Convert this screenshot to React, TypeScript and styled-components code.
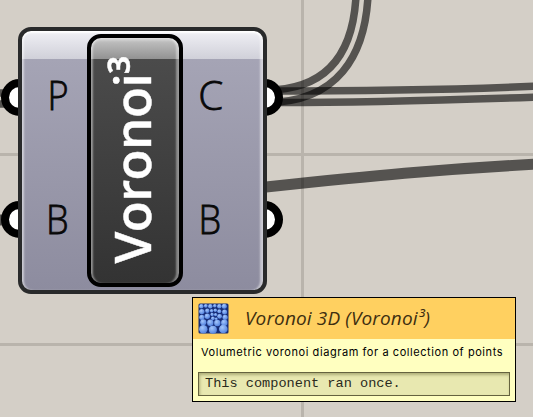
import React from "react";
import styled, { createGlobalStyle } from "styled-components";

const Global = createGlobalStyle`
  html, body, #root { margin: 0; height: 100%; }
  body { overflow: hidden; }
`;

const Canvas = styled.main`
  position: relative;
  width: 533px;
  height: 417px;
  overflow: hidden;
  background: #d4cfc7;
`;

const Wires = styled.svg`
  position: absolute;
  inset: 0;
`;

const Node = styled.section`
  position: absolute;
  left: 18px;
  top: 27px;
  width: 249px;
  height: 267px;
  box-sizing: border-box;
  padding: 3px 0;
  border: 4px solid #292a2b;
  border-radius: 13px;
  display: grid;
  grid-template-columns: 65px 96px 1fr;
  background: linear-gradient(#f0f0f5 0, #d0d0d9 28px, #a5a4b5 28px, #8d8c9f 100%) padding-box;
  box-shadow: inset 0 3px 2px -1px #fff, inset 3px 0 2px -1px rgba(255, 255, 255, 0.5),
    inset -4px 0 2px -1px rgba(255, 255, 255, 0.5);
`;

const PortColumn = styled.div`
  display: grid;
  grid-template-rows: 124px 124px;
  justify-items: center;
`;

const PortName = styled.span<{ $shift: number; $stretch?: number }>`
  font: 300 41px/121px "Open Sans", "Noto Sans", sans-serif;
  color: #080808;
  -webkit-text-stroke: 0.8px #080808;
  transform: translateX(${(p) => p.$shift}px) scaleX(${(p) => p.$stretch ?? 0.88});
`;

const Plate = styled.div`
  width: 96px;
  height: 253px;
  box-sizing: border-box;
  border: 4px solid #000;
  border-radius: 14px;
  display: flex;
  align-items: center;
  justify-content: center;
  background: linear-gradient(#c6c6c6 0, #929292 21px, #4b4b4b 21px, #333 100%) padding-box;
  box-shadow: inset 0 3px 3px -1px rgba(255, 255, 255, 0.45), inset 3px 0 2px -1px rgba(255, 255, 255, 0.42),
    inset -4px 0 2px -1px rgba(255, 255, 255, 0.4);
`;

const PlateName = styled.span`
  writing-mode: vertical-rl;
  transform: translate(-4px, -1px) rotate(180deg);
  font: 600 51px/70px "Open Sans", "Noto Sans", sans-serif;
  letter-spacing: -0.6px;
  color: #fff;
  -webkit-text-stroke: 0.4px #fff;
  white-space: nowrap;
`;

const Tooltip = styled.aside`
  position: absolute;
  left: 192px;
  top: 297px;
  width: 324px;
  height: 105px;
  box-sizing: border-box;
  border: 1px solid #000;
  background: #ffffc0;
`;

const TipHeader = styled.header`
  height: 41px;
  display: flex;
  align-items: center;
  padding-left: 5px;
  gap: 16px;
  background: #ffd060;
`;

const TipTitle = styled.h1`
  margin: 0;
  font: italic 400 19px/39px "Open Sans", "Noto Sans", sans-serif;
  letter-spacing: 0.14px;
  color: #3d2e10;
  white-space: nowrap;
`;

const TipText = styled.p`
  margin: 0;
  padding-left: 8px;
  font: 400 11px/26px Inter, sans-serif;
  letter-spacing: 0.57px;
  color: #000;
  white-space: nowrap;
`;

const Status = styled.div`
  margin: 7px 5px 0 5px;
  height: 24px;
  box-sizing: border-box;
  border: 1px solid #66633f;
  background: #e8e8b0;
  box-shadow: inset 1px 2px 3px rgba(90, 90, 40, 0.4);
  padding-left: 6px;
  font: 400 13.6px/21px "Liberation Mono", monospace;
  color: #2a2a1c;
  white-space: nowrap;
`;

const cells: [number, number, number][] = [
  [3, 3, 2], [7.5, 2.5, 1.7], [12, 3, 2], [16.5, 2.5, 1.6], [21, 3, 2], [26, 3, 2.3],
  [3.5, 8.3, 2.5], [9, 7.5, 2], [13.3, 7.5, 1.5], [17, 7, 1.5], [21, 8, 1.8], [26.3, 8.6, 2.3],
  [3.5, 14, 2.4], [9, 13, 2.5], [13.8, 11.2, 1.5], [17.3, 11.3, 1.4], [21.3, 13, 2.2], [26.8, 14, 2.4],
  [14.6, 15, 1.7], [18, 15.5, 1.2], [5, 19, 2.9], [12, 19.5, 3], [19, 19.7, 3], [26, 19.5, 3],
  [5, 26, 4], [14.6, 26.4, 3.8], [25, 25.7, 4.1],
];

const VoronoiIcon = () => (
  <svg width="31" height="31" viewBox="0 0 31 31">
    <defs>
      <radialGradient id="cell" cx=".38" cy=".32" r=".75">
        <stop offset="0" stopColor="#a5c7fb" />
        <stop offset="1" stopColor="#4c7ddd" />
      </radialGradient>
    </defs>
    <rect x=".5" y=".5" width="30" height="30" rx="1.5" fill="#172d77" />
    {cells.map(([x, y, r], i) => (
      <circle key={i} cx={x + 0.3} cy={y + 0.3} r={r + 0.2} fill="url(#cell)" />
    ))}
  </svg>
);

export default function App() {
  return (
    <Canvas>
      <Global />
      <Wires width="533" height="417">
        <g stroke="#b9b4ac" strokeWidth="3">
          <path d="M0 154.5H533M0 344.5H533M302.5 0V417" />
        </g>
        <g fill="none" stroke="#000" strokeOpacity=".6" strokeWidth="7.5">
          <path d="M266 91C360 91 450 90 540 86" />
          <path d="M266 102.5C360 103 450 100 540 97" />
          <path d="M266 90C326 90 353 55 356 -4" />
          <path d="M266 102.5C338 102.5 365 55 368 -4" />
          <path d="M-2 93H14M-2 104H14" />
          <path d="M266 187C370 176 440 169 540 164" strokeWidth="11" />
          <path d="M-2 220H10" strokeWidth="11" />
        </g>
        <g fill="#fff" stroke="#000" strokeWidth="8">
          <circle cx="19.5" cy="97.5" r="14.5" />
          <circle cx="19.5" cy="219.5" r="14.5" />
          <circle cx="264.5" cy="97.5" r="14.5" />
          <circle cx="264.5" cy="219.5" r="14.5" />
        </g>
      </Wires>
      <Node>
        <PortColumn>
          <PortName $shift={3}>P</PortName>
          <PortName $shift={2.5}>B</PortName>
        </PortColumn>
        <Plate>
          <PlateName>Voronoi³</PlateName>
        </Plate>
        <PortColumn>
          <PortName $shift={-12} $stretch={0.98}>C</PortName>
          <PortName $shift={-13}>B</PortName>
        </PortColumn>
      </Node>
      <Tooltip>
        <TipHeader>
          <VoronoiIcon />
          <TipTitle>Voronoi 3D (Voronoi³)</TipTitle>
        </TipHeader>
        <TipText>Volumetric voronoi diagram for a collection of points</TipText>
        <Status>This component ran once.</Status>
      </Tooltip>
    </Canvas>
  );
}
